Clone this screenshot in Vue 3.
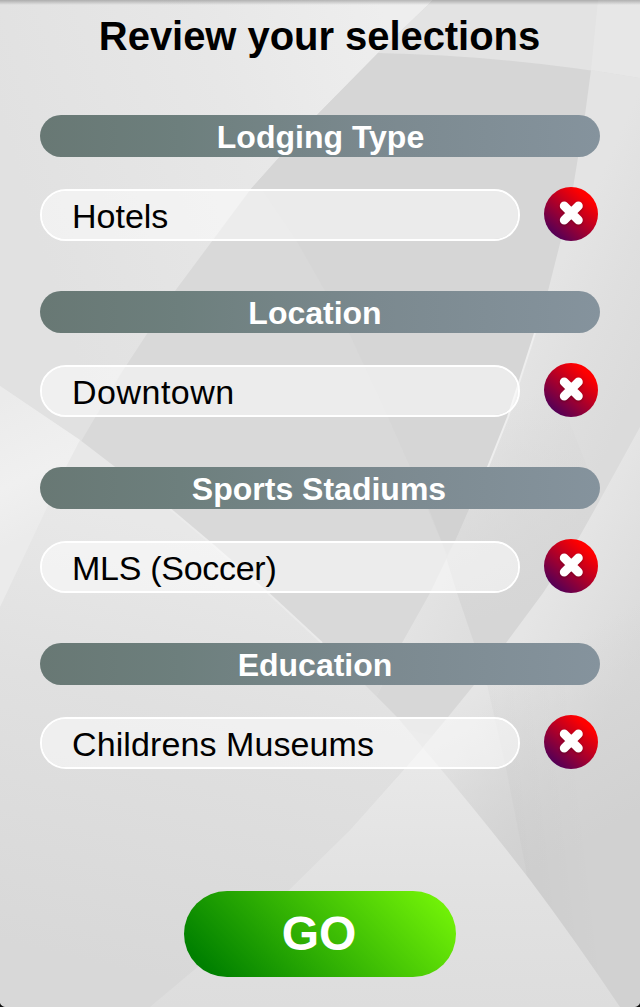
<script setup>
import { ref } from 'vue'

const selections = ref([
  { id: 'lodging', title: 'Lodging Type', value: 'Hotels' },
  { id: 'location', title: 'Location', value: 'Downtown' },
  { id: 'sports', title: 'Sports Stadiums', value: 'MLS (Soccer)' },
  { id: 'education', title: 'Education', value: 'Childrens Museums' },
])
</script>

<template>
  <main class="screen">
    <svg class="backdrop" viewBox="0 0 640 1007" aria-hidden="true">
      <defs>
        <linearGradient id="left" gradientUnits="userSpaceOnUse" x1="0" y1="120" x2="380" y2="0">
          <stop offset="0" stop-color="#e1e1e1" />
          <stop offset="0.55" stop-color="#e7e7e7" />
          <stop offset="1" stop-color="#eeeeee" />
        </linearGradient>
        <linearGradient id="right" gradientUnits="userSpaceOnUse" x1="530" y1="330" x2="640" y2="380">
          <stop offset="0" stop-color="#e4e4e4" />
          <stop offset="0.5" stop-color="#dfdfdf" />
          <stop offset="1" stop-color="#dbdbdb" />
        </linearGradient>
        <linearGradient id="wedge" gradientUnits="userSpaceOnUse" x1="510" y1="400" x2="560" y2="600">
          <stop offset="0" stop-color="#d6d6d6" stop-opacity="0" />
          <stop offset="1" stop-color="#d6d6d6" />
        </linearGradient>
        <linearGradient id="lowerRight" gradientUnits="userSpaceOnUse" x1="530" y1="620" x2="630" y2="675">
          <stop offset="0" stop-color="#e5e5e5" />
          <stop offset="1" stop-color="#dadada" />
        </linearGradient>
        <linearGradient id="fall" gradientUnits="userSpaceOnUse" x1="480" y1="690" x2="570" y2="850">
          <stop offset="0" stop-color="#d1d1d1" stop-opacity="0" />
          <stop offset="1" stop-color="#d1d1d1" />
        </linearGradient>
        <linearGradient id="crease" gradientUnits="userSpaceOnUse" x1="495" y1="750" x2="580" y2="740">
          <stop offset="0" stop-color="#000" stop-opacity="0.022" />
          <stop offset="1" stop-color="#000" stop-opacity="0" />
        </linearGradient>
        <linearGradient id="lowerLeft" gradientUnits="userSpaceOnUse" x1="180" y1="530" x2="80" y2="960">
          <stop offset="0" stop-color="#e8e8e8" />
          <stop offset="0.4" stop-color="#e0e0e0" />
          <stop offset="1" stop-color="#d8d8d8" />
        </linearGradient>
        <linearGradient id="farLeft" gradientUnits="userSpaceOnUse" x1="0" y1="400" x2="60" y2="520">
          <stop offset="0" stop-color="#ebebeb" />
          <stop offset="0.6" stop-color="#f0f0f0" />
          <stop offset="1" stop-color="#ebebeb" />
        </linearGradient>
        <linearGradient id="peak" gradientUnits="userSpaceOnUse" x1="0" y1="750" x2="0" y2="1007">
          <stop offset="0" stop-color="#e9e9e9" />
          <stop offset="0.5" stop-color="#e2e2e2" />
          <stop offset="1" stop-color="#dddddd" />
        </linearGradient>
        <linearGradient id="topBar" x1="0" y1="0" x2="0" y2="1">
          <stop offset="0" stop-color="#000" stop-opacity="0.24" />
          <stop offset="1" stop-color="#000" stop-opacity="0" />
        </linearGradient>
      </defs>
      <rect width="640" height="1007" fill="#d9d9d9" />
      <path d="M0 0H433L378 53 317 115 250 190 175 291 120 375 66 467 0 607Z" fill="url(#left)" />
      <path d="M378 53L317 115 250 190 262 190 296 240 349 333 388 417 410 467 441 541 520 541 591 115V60Z" fill="#d6d6d6" />
      <path d="M433 0H640V78Q500 55 378 53Z" fill="#e3e3e3" />
      <path d="M598 0H640V78L591 70Z" fill="#e7e7e7" />
      <path d="M591 70L640 78V720H365L382 685 402 643 430 593 455 541 469 509 488 467 508 417 520 380 535 333 548 291 571 200 585 115Z" fill="url(#right)" />
      <path d="M535 333L508 417 488 467 469 509 455 541 441 541 457 593 474 643 488 685 500 700 600 500Z" fill="url(#wedge)" />
      <path d="M382 685L365 720 450 740 500 670Z" fill="#d7d7d7" />
      <path d="M410 467L429 509 447 555 455 541 469 509 488 467Z" fill="#d2d2d2" />
      <path d="M535 333L508 417 488 467 469 509" fill="none" stroke="#eee" stroke-width="2" />
      <path d="M640 427V1007H400V775L448 717 474 685 506 643 543 593 577 541 595 509Z" fill="url(#lowerRight)" />
      <path d="M640 427V1007H400V775L448 717 474 685 506 643 543 593 577 541 595 509Z" fill="url(#fall)" />
      <path d="M486 680L506 768 526 870 541 1007H640V680Z" fill="url(#crease)" />
      <path d="M0 386L80 440 170 509 268 593 322 643 365 685 398 718 423 748 405 768 350 830 288 891 150 1007H0Z" fill="url(#lowerLeft)" />
      <path d="M0 386L80 440 66 467 35 533 0 607Z" fill="url(#farLeft)" />
      <path d="M170 509L208 541 268 593 322 643" fill="none" stroke="#ebebeb" stroke-width="2" />
      <path d="M423 748Q480 815 530 880 575 940 620 1007H150L288 891 350 830Z" fill="url(#peak)" />
      <rect width="640" height="5" fill="url(#topBar)" />
      <path d="M0 1003Q1 1006 5 1007H0ZM640 1003Q639 1006 635 1007H640Z" fill="#111" />
    </svg>

    <h1 class="title">Review your selections</h1>

    <section v-for="item in selections" :key="item.id" class="group" :class="item.id">
      <h2 class="heading">{{ item.title }}</h2>
      <div class="row">
        <div class="value">{{ item.value }}</div>
        <button class="remove" type="button" :aria-label="`Remove ${item.value}`">
          <svg class="cross" viewBox="0 0 54 54">
            <path d="M20.2 18.9L34.4 33.1M34.4 18.9L20.2 33.1" />
          </svg>
        </button>
      </div>
    </section>

    <button class="go" type="button">GO</button>
  </main>
</template>

<style>
body {
  background: #dedede;
}
</style>

<style scoped>
.screen {
  position: relative;
  isolation: isolate;
  box-sizing: border-box;
  width: 640px;
  height: 1007px;
  padding: 0 40px;
  overflow: hidden;
  display: flex;
  flex-direction: column;
  font-family: "Liberation Sans", Arial, sans-serif;
}
.backdrop {
  position: absolute;
  inset: 0;
  z-index: -1;
  width: 640px;
  height: 1007px;
}
.title {
  margin: 0 0 41px;
  padding: 14px 1px 0 0;
  height: 60px;
  line-height: 44px;
  font-size: 40px;
  letter-spacing: -0.05px;
  font-weight: 700;
  text-align: center;
  white-space: nowrap;
  color: #000;
}
.group {
  height: 176px;
  flex: none;
}
.heading {
  box-sizing: border-box;
  height: 42px;
  margin: 0;
  padding: 4px 0 0 1px;
  border-radius: 21px;
  background: linear-gradient(90deg, #687874, #6d7f7d 25%, #7b898f 60%, #85939d);
  color: #fff;
  font-size: 32px;
  line-height: 36px;
  font-weight: 700;
  text-align: center;
}
.location .heading,
.education .heading {
  padding: 4px 10px 0 0;
}
.sports .heading {
  padding: 4px 2px 0 0;
}
.row {
  display: flex;
  align-items: flex-end;
  gap: 24px;
  margin-top: 30px;
  height: 54px;
}
.value {
  box-sizing: border-box;
  width: 480px;
  height: 52px;
  padding: 6px 30px 0;
  border: 2px solid #fff;
  border-radius: 26px;
  background: rgba(255, 255, 255, 0.5);
  background-clip: padding-box;
  font-size: 34px;
  line-height: 38px;
  white-space: nowrap;
  color: #000;
}
.location .value {
  letter-spacing: 0.5px;
}
.sports .value {
  letter-spacing: -0.28px;
}
.education .value {
  letter-spacing: 0.1px;
}
.remove {
  width: 54px;
  height: 54px;
  padding: 0;
  border: 0;
  border-radius: 50%;
  background: linear-gradient(40deg, #400060 7%, #ff0000 80%);
}
.cross {
  display: block;
  width: 54px;
  height: 54px;
  filter: drop-shadow(0 1px 1px rgba(60, 0, 0, 0.4));
}
.cross path {
  fill: none;
  stroke: #fff;
  stroke-width: 8.8;
  stroke-linecap: round;
}
.go {
  align-self: center;
  width: 272px;
  height: 86px;
  margin-top: 72px;
  padding: 0 2px 0 0;
  border: 0;
  border-radius: 43px;
  background: linear-gradient(45deg, #008000 9%, #78f808 98%);
  color: #fff;
  font: 700 48px/86px "Liberation Sans", Arial, sans-serif;
}
</style>
